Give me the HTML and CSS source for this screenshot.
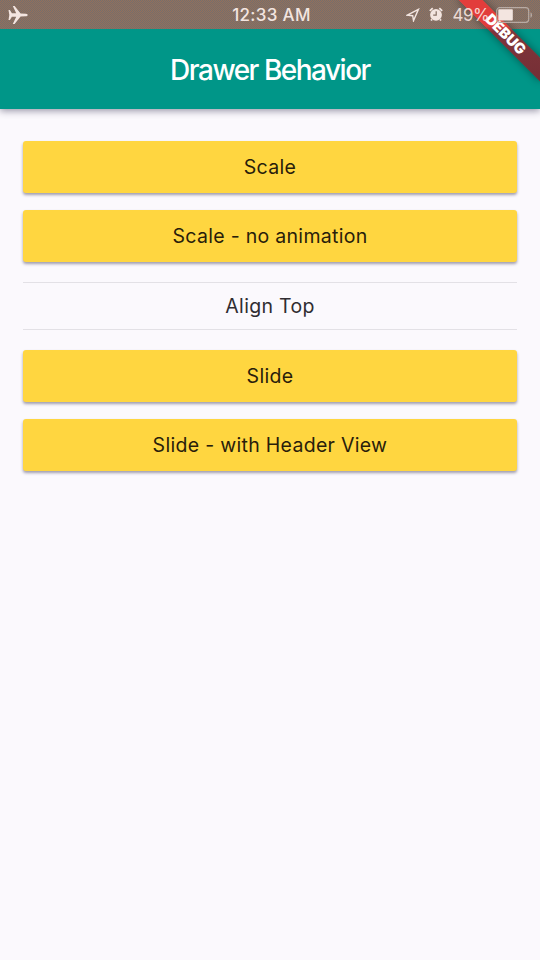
FILE: index.html
```html
<!DOCTYPE html>
<html lang="en">
<head>
<meta charset="utf-8">
<title>Drawer Behavior</title>
<link rel="stylesheet" href="styles.css">
</head>
<body>
<div class="status">
  <svg class="plane" viewBox="0 0 20 20"><path d="M0.5 5h1.4l2 3.3H8.2L4.8 0.9h1.8l6 7.5 5.3.3c2.4.2 2.4 2.4 0 2.6l-5.3.3-6 7.5H4.8L8.2 11.7H3.9L1.9 15H.5l.8-5z"/></svg>
  <span class="time">12:33 AM</span>
  <div class="indicators">
    <svg class="arrow" viewBox="0 0 14 14"><path d="M12.4 1.4 1.3 7.2l5.4.5.8 5z"/></svg>
    <svg class="alarm" viewBox="0 0 14 15"><circle cx="7" cy="7.8" r="5.9"/><path class="bells" d="M.8 3.8 3.7 1.2M10.3 1.2l2.9 2.6M3 12.3l-1 1.2M11 12.3l1 1.2"/><path class="hands" d="M7.2 4.3V8.2H4.2"/></svg>
    <span class="percent">49%</span>
    <svg class="battery" viewBox="0 0 37 16"><rect class="case" x=".7" y=".7" width="32" height="14.6" rx="3"/><rect class="charge" x="2.3" y="2.3" width="14.5" height="11.2" rx=".8"/><path class="tip" d="M34.5 5.2c2 .8 2 4.8 0 5.6z"/></svg>
  </div>
</div>
<header class="appbar"><h1>Drawer Behavior</h1></header>
<main>
  <button class="btn">Scale</button>
  <button class="btn">Scale - no animation</button>
  <div class="divider">Align Top</div>
  <button class="btn">Slide</button>
  <button class="btn">Slide - with Header View</button>
</main>
<div class="corner"><div class="banner">DEBUG</div></div>
</body>
</html>
```
FILE: styles.css
```css
* { box-sizing: border-box; }
body {
  margin: 0;
  width: 540px;
  height: 960px;
  overflow: hidden;
  background: #fbf9fd;
  font-family: Inter, "Liberation Sans", sans-serif;
}
.status {
  height: 29px;
  display: grid;
  grid-template-columns: 1fr auto 1fr;
  align-items: center;
  padding: 0 8px;
  background: repeating-conic-gradient(#94705a 0 25%, #756e6c 0 50%) 0 0 / 2px 2px;
  color: #f3e5e0;
}
.plane { width: 20px; height: 20px; fill: #f3e5e0; }
.time { font-size: 17px; line-height: 27px; padding-top: 2px; font-weight: 500; letter-spacing: 0.3px; padding-left: 3px; }
.indicators {
  position: relative;
  z-index: 5;
  display: flex;
  align-items: center;
  justify-content: flex-end;
}
.arrow { width: 14px; height: 14px; fill: none; stroke: #f3e5e0; stroke-width: 1.4; margin-right: 9px; }
.alarm { width: 14px; height: 15px; fill: #f3e5e0; margin-right: 10px; }
.bells { stroke: #f3e5e0; stroke-width: 1.8; fill: none; }
.hands { stroke: #846f63; stroke-width: 1.2; fill: none; }
.percent { font-size: 17px; line-height: 20px; padding-top: 1px; letter-spacing: -0.6px; margin-right: 7px; color: rgba(250, 232, 227, 0.9); }
.battery { width: 37px; height: 16px; margin-right: -1px; }
.case { fill: none; stroke: #b8aaa3; stroke-width: 1.2; }
.charge { fill: #f3e5e0; }
.tip { fill: #b8aaa3; }
.appbar {
  position: relative;
  height: 80px;
  display: flex;
  align-items: center;
  justify-content: center;
  background: #009688;
  clip-path: inset(0 0 -20px 0);
  box-shadow: 0 2px 7px rgba(35, 30, 65, 0.45);
}
h1 { margin: 0; padding-top: 2px; color: #fff; font-size: 28px; font-weight: 500; letter-spacing: -1.5px; line-height: 34px; }
main { padding: 32px 23px 0; display: flex; flex-direction: column; }
.btn {
  height: 52px;
  margin: 0 0 17px;
  padding: 0;
  border: 0;
  border-radius: 3px;
  background: #ffd640;
  color: #291d0b;
  font: 400 19.5px/52px Inter, "Liberation Sans", sans-serif;
  letter-spacing: 0.3px;
  box-shadow: 0 2px 3px rgba(35, 30, 65, 0.42);
}
.divider {
  height: 48px;
  margin: 3px 0 20px;
  border-top: 1px solid #e3e1e6;
  border-bottom: 1px solid #e3e1e6;
  text-align: center;
  color: #302d31;
  font-size: 19.5px;
  line-height: 46px;
  letter-spacing: 0.3px;
}
.corner {
  position: absolute;
  z-index: 4;
  top: 0;
  right: 0;
  width: 110px;
  height: 109px;
  overflow: hidden;
}
.banner {
  position: absolute;
  left: 17.4px;
  top: 25.9px;
  width: 116px;
  height: 17.3px;
  transform: rotate(45deg);
  background: linear-gradient(135deg, #e23d3b 0, #e23d3b 41%, #80353a 47%, #752f36 100%);
  box-shadow: 0 0 8px rgba(0, 0, 0, 0.4);
  color: #fff;
  font-size: 14.7px;
  font-weight: 900;
  line-height: 17.3px;
  letter-spacing: -0.2px;
  text-align: center;
}
```
